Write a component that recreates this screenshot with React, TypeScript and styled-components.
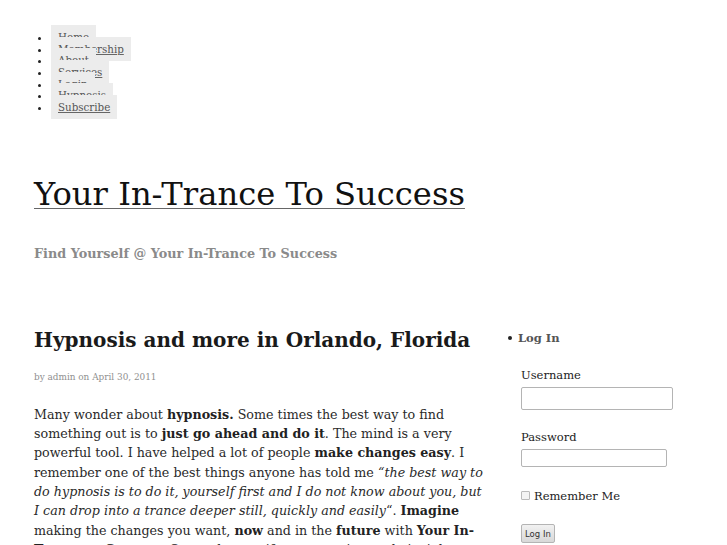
import React from "react";
import styled, { createGlobalStyle } from "styled-components";

const Global = createGlobalStyle`
  html, body { margin: 0; padding: 0; background: #fff; }
  body { font-family: "DejaVu Serif", serif; color: #222; overflow: hidden; }
`;

const Page = styled.div`
  padding: 32px 0 0 34px;
  width: 693px;
`;

const NavList = styled.ul`
  margin: 0;
  padding: 0 0 0 17px;
  font-size: 10.3px;
  line-height: 11.67px;
`;

const NavItem = styled.li`
  color: #222;
`;

const NavLink = styled.a`
  padding: 6px 7px;
  background: #ececec;
  color: #555;
  text-decoration: underline;
  text-decoration-color: #666;
`;

const SiteTitle = styled.h1`
  margin: 61px 0 0;
  font-size: 32.2px;
  font-weight: normal;
  line-height: normal;
  a {
    color: #111;
    text-decoration: underline;
    text-decoration-color: #666;
    text-decoration-thickness: 1px;
    text-underline-offset: 3px;
  }
`;

const Tagline = styled.div`
  margin-top: 33.5px;
  font-size: 12.8px;
  font-weight: bold;
  color: #8a8a8a;
  line-height: normal;
`;

const Columns = styled.div`
  display: flex;
  margin-top: 66.5px;
`;

const Main = styled.main`
  width: 452px;
`;

const PostTitle = styled.h2`
  margin: 0;
  font-size: 20px;
  font-weight: bold;
  color: #1a1a1a;
  line-height: normal;
`;

const Meta = styled.div`
  margin-top: 20px;
  font-size: 8.9px;
  color: #8f8f8f;
  line-height: normal;
`;

const Body = styled.p`
  margin: 23px 0 0;
  font-size: 12.7px;
  line-height: 19.35px;
  color: #2a2a2a;
  b { color: #222; }
`;

const Sidebar = styled.aside`
  margin-left: 22px;
  width: 190px;
  padding-top: 3px;
`;

const WidgetList = styled.ul`
  margin: 0;
  padding: 0;
  list-style: none;
  line-height: normal;
  font-size: 11.5px;
`;

const WidgetTitle = styled.h3`
  margin: 0;
  font-size: 11.5px;
  font-weight: bold;
  color: #555;
  &::before {
    content: "";
    display: inline-block;
    width: 4px;
    height: 4px;
    border-radius: 50%;
    background: #222;
    margin: 0 6px 2px 0;
    vertical-align: middle;
  }
`;

const Form = styled.form`
  margin: 23.5px 0 0 13px;
`;

const Label = styled.label`
  display: block;
  font-size: 11.5px;
  color: #222;
  margin-bottom: 4.8px;
`;

const Field = styled.div<{ $gap: number }>`
  margin-bottom: ${(p) => p.$gap}px;
`;

const TextInput = styled.input<{ $w: number; $h: number }>`
  display: block;
  box-sizing: border-box;
  width: ${(p) => p.$w}px;
  height: ${(p) => p.$h}px;
  border: 1px solid #b4b4b4;
  border-radius: 2px;
  margin: 0;
  background: #fff;
`;

const CheckRow = styled.label`
  display: flex;
  align-items: center;
  gap: 4px;
  font-size: 11.5px;
  color: #222;
  input {
    margin: 0;
    width: 9px;
    height: 9px;
    appearance: none;
    border: 1px solid #bbb;
    border-radius: 1px;
    background: #f4f4f4;
    box-sizing: border-box;
  }
`;

const Button = styled.button`
  display: block;
  margin-top: 21.5px;
  font-family: "DejaVu Sans", sans-serif;
  font-size: 8.5px;
  white-space: nowrap;
  padding: 0 3px;
  height: 19px;
  border: 1px solid #b4b4b4;
  border-radius: 2px;
  background: linear-gradient(#f2f2f2, #d8d8d8);
  color: #333;
`;

const navItems = ["Home", "Membership", "About", "Services", "Login", "Hypnosis", "Subscribe"];

export default function App() {
  return (
    <Page>
      <Global />
      <NavList>
        {navItems.map((n) => (
          <NavItem key={n}>
            <NavLink href="#">{n}</NavLink>
          </NavItem>
        ))}
      </NavList>
      <SiteTitle>
        <a href="#">Your In-Trance To Success</a>
      </SiteTitle>
      <Tagline>Find Yourself @ Your In-Trance To Success</Tagline>
      <Columns>
        <Main>
          <PostTitle>Hypnosis and more in Orlando, Florida</PostTitle>
          <Meta>by admin on April 30, 2011</Meta>
          <Body>
            Many wonder about <b>hypnosis.</b> Some times the best way to find something out is to{" "}
            <b>just go ahead and do it</b>. The mind is a very powerful tool. I have helped a lot of people{" "}
            <b>make changes easy</b>. I remember one of the best things anyone has told me{" "}
            <i>“the best way to do hypnosis is to do it, yourself first and I do not know about you, but I can drop into a trance deeper still, quickly and easily</i>“.{" "}
            <b>Imagine</b> making the changes you want, <b>now</b> and in the <b>future</b> with{" "}
            <b>Your In-Trance to Success</b>. See and sense if you are going to do it right now all by yourself.
          </Body>
        </Main>
        <Sidebar>
          <WidgetList>
            <li>
              <WidgetTitle>Log In</WidgetTitle>
              <Form onSubmit={(e) => e.preventDefault()}>
                <Field $gap={20}>
                  <Label htmlFor="u">Username</Label>
                  <TextInput id="u" $w={152} $h={23} />
                </Field>
                <Field $gap={22}>
                  <Label htmlFor="p">Password</Label>
                  <TextInput id="p" type="password" $w={146} $h={18} />
                </Field>
                <CheckRow>
                  <input type="checkbox" /> Remember Me
                </CheckRow>
                <Button type="submit">Log In</Button>
              </Form>
            </li>
          </WidgetList>
        </Sidebar>
      </Columns>
    </Page>
  );
}
